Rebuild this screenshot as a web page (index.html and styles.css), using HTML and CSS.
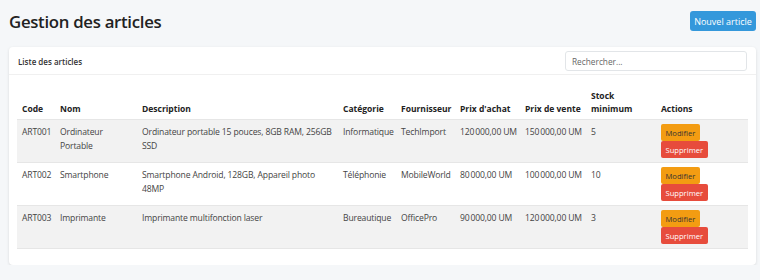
FILE: index.html
```html
<!DOCTYPE html>
<html lang="fr">
<head>
<meta charset="utf-8">
<title>Gestion des articles</title>
<link rel="stylesheet" href="styles.css">
</head>
<body>
<div class="page">
  <header class="page-header">
    <h1 class="page-title">Gestion des articles</h1>
    <button class="btn btn-primary">Nouvel article</button>
  </header>
  <section class="card">
    <div class="card-header">
      <span class="card-title">Liste des articles</span>
      <input class="search" type="text" placeholder="Rechercher...">
    </div>
    <div class="card-body">
      <table class="table">
        <colgroup>
          <col class="c-code"><col class="c-nom"><col class="c-desc"><col class="c-cat"><col class="c-four"><col class="c-pa"><col class="c-pv"><col class="c-stock"><col class="c-act">
        </colgroup>
        <thead>
          <tr>
            <th>Code</th><th>Nom</th><th>Description</th><th>Catégorie</th><th>Fournisseur</th><th>Prix d'achat</th><th>Prix de vente</th><th>Stock minimum</th><th>Actions</th>
          </tr>
        </thead>
        <tbody>
          <tr>
            <td>ART001</td><td>Ordinateur Portable</td><td>Ordinateur portable 15 pouces, 8GB RAM, 256GB SSD</td><td>Informatique</td><td>TechImport</td><td class="price">120&#8239;000,00 UM</td><td class="price">150&#8239;000,00 UM</td><td>5</td>
            <td class="actions"><button class="btn-sm btn-warn">Modifier</button><button class="btn-sm btn-danger">Supprimer</button></td>
          </tr>
          <tr>
            <td>ART002</td><td>Smartphone</td><td>Smartphone Android, 128GB, Appareil photo 48MP</td><td>Téléphonie</td><td>MobileWorld</td><td class="price">80&#8239;000,00 UM</td><td class="price">100&#8239;000,00 UM</td><td>10</td>
            <td class="actions"><button class="btn-sm btn-warn">Modifier</button><button class="btn-sm btn-danger">Supprimer</button></td>
          </tr>
          <tr>
            <td>ART003</td><td>Imprimante</td><td>Imprimante multifonction laser</td><td>Bureautique</td><td>OfficePro</td><td class="price">90&#8239;000,00 UM</td><td class="price">120&#8239;000,00 UM</td><td>3</td>
            <td class="actions"><button class="btn-sm btn-warn">Modifier</button><button class="btn-sm btn-danger">Supprimer</button></td>
          </tr>
        </tbody>
      </table>
    </div>
  </section>
</div>
</body>
</html>
```
FILE: styles.css
```css
* { box-sizing: border-box; }
html, body { margin: 0; padding: 0; }
body {
  background: #f5f7f9;
  font-family: "Open Sans", "Noto Sans", sans-serif;
  color: #212529;
}
.page { padding: 0 4px 0 9px; }
.page-header {
  display: flex;
  align-items: center;
  justify-content: space-between;
  height: 42px;
  margin-bottom: 5px;
}
.page-title {
  margin: 0;
  font-size: 16.8px;
  font-weight: 600;
  color: #222;
  letter-spacing: -0.3px;
}
.btn {
  font-family: inherit;
  border: 0;
  border-radius: 3px;
  cursor: pointer;
}
.btn-primary {
  background: #3498db;
  color: #fff;
  font-size: 9px;
  height: 20px;
  width: 66px;
  padding: 0;
}
.card {
  background: #fff;
  border-radius: 4px;
  box-shadow: 0 1px 3px rgba(0,0,0,0.12);
  overflow: hidden;
}
.card-header {
  display: flex;
  align-items: center;
  justify-content: space-between;
  padding: 4px 9px 3px 9px;
  border-bottom: 1px solid #f0f0f0;
}
.card-title {
  font-size: 8px;
  font-weight: 600;
  color: #333;
}
.search {
  width: 182px;
  height: 20px;
  border: 1px solid #e2e5e8;
  border-radius: 3px;
  padding: 0 6px;
  font-family: inherit;
  font-size: 8.3px;
  color: #555;
}
.search::placeholder { color: #666; }
.card-body { padding: 9px 8px 16px 8px; }
.table {
  width: 100%;
  table-layout: fixed;
  border-collapse: collapse;
  font-size: 8.6px;
}
.c-code { width: 38px; }
.c-nom { width: 82px; }
.c-desc { width: 201px; }
.c-cat { width: 58px; }
.c-four { width: 59px; }
.c-pa { width: 65px; }
.c-pv { width: 66px; }
.c-stock { width: 70px; }
.c-act { width: 92px; }
.table th {
  text-align: left;
  vertical-align: bottom;
  font-weight: 700;
  font-size: 8.5px;
  color: #222;
  line-height: 13px;
  padding: 5px 5px 4px 5px;
}
.table td {
  vertical-align: top;
  color: #444;
  line-height: 14px;
  letter-spacing: -0.15px;
  padding: 5px 5px 3px 5px;
  border-top: 1px solid #e6e6e6;
}
.table td.price { white-space: nowrap; }
.table tbody tr:nth-child(odd) { background: #f2f2f2; }
.table tbody tr:last-child td { border-bottom: 1px solid #e6e6e6; }
.table td.actions { padding-top: 4px; padding-bottom: 4px; }
.btn-sm {
  display: block;
  font-family: inherit;
  font-size: 7.6px;
  letter-spacing: 0;
  height: 17px;
  padding: 0 4.5px;
  border: 0;
  border-radius: 2px;
}
.btn-warn { background: #f39c12; color: #333; }
.btn-danger { background: #e74c3c; color: #fff; }
```
